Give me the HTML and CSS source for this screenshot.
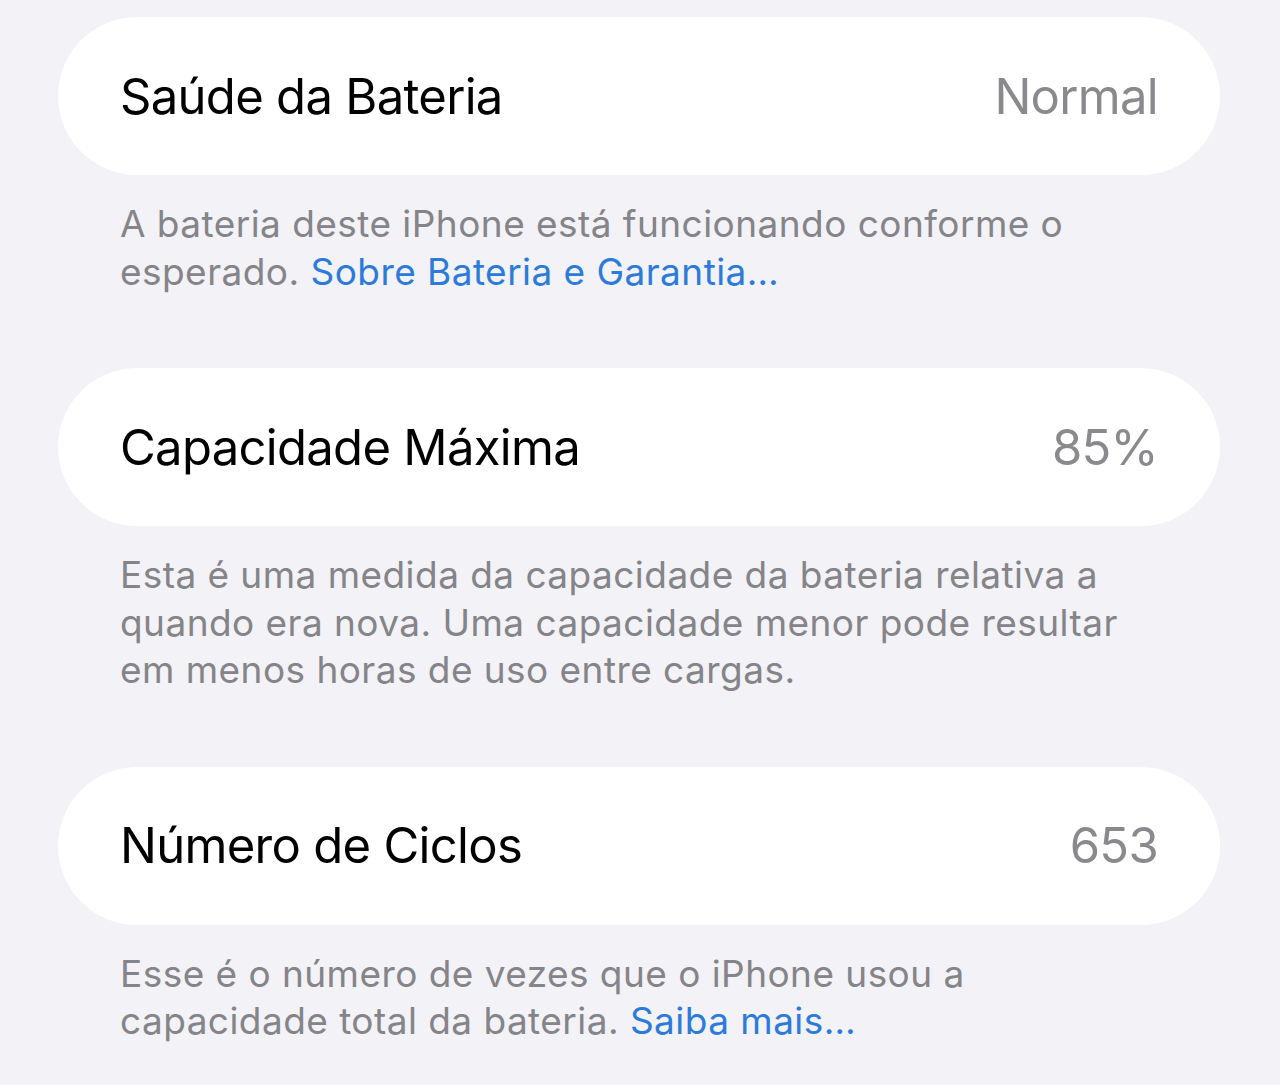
FILE: index.html
```html
<!DOCTYPE html>
<html lang="pt-BR">
<head>
<meta charset="utf-8">
<title>Bateria</title>
<link rel="stylesheet" href="styles.css">
</head>
<body>
<main class="page">
  <section class="group">
    <div class="card">
      <span class="label">Saúde da Bateria</span>
      <span class="value">Normal</span>
    </div>
    <p class="footer">A bateria deste iPhone está funcionando conforme o esperado. <a class="link" href="#">Sobre Bateria e Garantia…</a></p>
  </section>
  <section class="group">
    <div class="card">
      <span class="label">Capacidade Máxima</span>
      <span class="value">85%</span>
    </div>
    <p class="footer">Esta é uma medida da capacidade da bateria relativa a quando era nova. Uma capacidade menor pode resultar em menos horas de uso entre cargas.</p>
  </section>
  <section class="group">
    <div class="card">
      <span class="label">Número de Ciclos</span>
      <span class="value">653</span>
    </div>
    <p class="footer">Esse é o número de vezes que o iPhone usou a capacidade total da bateria. <a class="link" href="#">Saiba mais…</a></p>
  </section>
</main>
</body>
</html>
```

FILE: styles.css
```css
html, body {
  margin: 0;
  padding: 0;
  background: #f2f2f7;
}
body {
  font-family: "Inter", "Liberation Sans", sans-serif;
  -webkit-font-smoothing: antialiased;
}
.page {
  display: flex;
  flex-direction: column;
  gap: 73px;
  padding: 17px 60px 0 58px;
}
.group {
  display: flex;
  flex-direction: column;
}
.card {
  display: flex;
  align-items: center;
  justify-content: space-between;
  height: 158px;
  padding: 0 62px;
  background: #ffffff;
  border-radius: 79px;
}
.label {
  font-size: 49px;
  color: #000000;
  letter-spacing: -0.7px;
}
.value {
  font-size: 49px;
  color: #8a8a8e;
  letter-spacing: -0.7px;
}
.footer {
  margin: 0;
  padding: 25px 62px 0 62px;
  font-size: 37px;
  line-height: 47.5px;
  color: #848489;
  letter-spacing: 0.45px;
}
.link {
  color: #2c7bd9;
  text-decoration: none;
}
```
